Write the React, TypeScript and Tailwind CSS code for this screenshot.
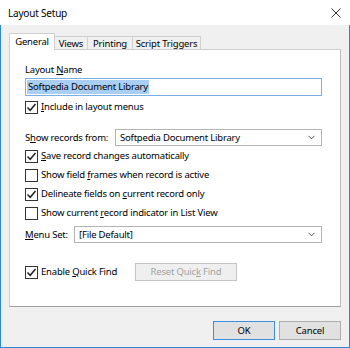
import React from 'react';

const font = { fontFamily: '"Noto Sans", "Open Sans", sans-serif' };

const Check = ({ checked }: { checked: boolean }) => (
  <span className="w-[13px] h-[13px] border border-[#333333] bg-white flex items-center justify-center shrink-0">
    {checked && (
      <svg width="11" height="11" viewBox="0 0 11 11">
        <path d="M1.5 5.5 L4.2 8.3 L9.5 2" fill="none" stroke="#222222" strokeWidth="1.5" />
      </svg>
    )}
  </span>
);

const CheckRow = ({ checked, children }: { checked: boolean; children: React.ReactNode }) => (
  <div className="flex items-center h-[14px] gap-[3px]">
    <Check checked={checked} />
    <span className="leading-[14px] whitespace-nowrap">{children}</span>
  </div>
);

const Chevron = () => (
  <svg width="7" height="5" viewBox="0 0 7 5" className="shrink-0">
    <path d="M0.5 0.8 L3.5 3.8 L6.5 0.8" fill="none" stroke="#555555" strokeWidth="1" />
  </svg>
);

// tab widths are fixed so they line up with the reference
const Tab = ({ label, width, active }: { label: string; width: string; active?: boolean }) =>
  active ? (
    <div className={`relative z-10 h-[17px] ${width} bg-white border border-b-0 border-[#d0d0d0] flex items-center justify-center leading-[14px] whitespace-nowrap`}>
      {label}
    </div>
  ) : (
    <div className={`h-[14px] ${width} bg-[#f0f0f0] border border-l-0 border-b-0 border-[#d0d0d0] flex items-center justify-center leading-[13px] whitespace-nowrap`}>
      {label}
    </div>
  );

const App: React.FC = () => {
  return (
    <div className="w-[350px] h-[348px] bg-[#f0f0f0] flex flex-col text-[9.5px] tracking-[-0.2px] text-black" style={font}>
      {/* title bar */}
      <div className="h-[25px] bg-white flex items-center justify-between pl-[8px] pr-[8px] shrink-0">
        <span className="text-[10px] leading-[14px]">Layout Setup</span>
        <svg width="10" height="10" viewBox="0 0 10 10" className="mr-[1px]">
          <path d="M0.5 0.5 L9.5 9.5 M9.5 0.5 L0.5 9.5" stroke="#333333" strokeWidth="1" />
        </svg>
      </div>

      <div className="flex-1 flex flex-col border-x border-b border-[#2f86d8] px-[8px] pt-[8px]">
        {/* tabs */}
        <div className="flex items-end h-[17px] -mb-px">
          <Tab label="General" width="w-[46px]" active />
          <Tab label="Views" width="w-[33px]" />
          <Tab label="Printing" width="w-[45px]" />
          <Tab label="Script Triggers" width="w-[68px]" />
        </div>

        {/* panel */}
        <div className="h-[258px] bg-white border border-[#cfcfcf] border-b-[#a0a0a0] border-r-[#bdbdbd] pl-[15px] pr-[18px] pt-[13px] flex flex-col">
          <div className="leading-[14px]">
            Layout <span className="underline">N</span>ame
          </div>
          <div className="mt-[1px] h-[18px] border border-[#7aaee4] flex items-center pl-[1px]">
            <span className="bg-[#a9cff3] leading-[14px] px-[1px] whitespace-nowrap">Softpedia Document Library</span>
          </div>
          <div className="mt-[4px]">
            <CheckRow checked>
              <span className="underline">I</span>nclude in layout menus
            </CheckRow>
          </div>

          <div className="mt-[15px] flex items-center h-[17px]">
            <span className="w-[90px] leading-[14px] whitespace-nowrap">
              S<span className="underline">h</span>ow records from:
            </span>
            <div className="flex-1 h-[17px] border border-[#b4b4b4] flex items-center justify-between pl-[4px] pr-[6px]">
              <span className="leading-[14px] whitespace-nowrap">Softpedia Document Library</span>
              <Chevron />
            </div>
          </div>

          <div className="mt-[3px] flex flex-col gap-[5px]">
            <CheckRow checked>
              <span className="underline">S</span>ave record changes automatically
            </CheckRow>
            <CheckRow checked={false}>
              Show field <span className="underline">f</span>rames when record is active
            </CheckRow>
            <CheckRow checked>
              Delineate fields on <span className="underline">c</span>urrent record only
            </CheckRow>
            <CheckRow checked={false}>
              Show current <span className="underline">r</span>ecord indicator in List View
            </CheckRow>
          </div>

          <div className="mt-[6px] flex items-center h-[17px]">
            <span className="w-[49px] leading-[14px] whitespace-nowrap">
              <span className="underline">M</span>enu Set:
            </span>
            <div className="flex-1 h-[17px] border border-[#b4b4b4] flex items-center justify-between pl-[4px] pr-[6px]">
              <span className="leading-[14px]">[File Default]</span>
              <Chevron />
            </div>
          </div>

          <div className="mt-[20px] flex items-center h-[18px]">
            <div className="w-[110px]">
              <CheckRow checked>
                Enable <span className="underline">Q</span>uick Find
              </CheckRow>
            </div>
            <button className="w-[102px] h-[18px] bg-[#efefef] border border-[#c6c6c6] text-[#a3a3a3] leading-[14px] flex items-center justify-center whitespace-nowrap">
              Reset Quic<span className="underline">k</span>&nbsp;Find
            </button>
          </div>
        </div>

        {/* buttons */}
        <div className="mt-[14px] flex justify-end gap-[4px]">
          <button className="w-[62px] h-[19px] bg-[#e1e1e1] border border-[#3c8fdc] leading-[14px] flex items-center justify-center">
            OK
          </button>
          <button className="w-[62px] h-[19px] bg-[#e1e1e1] border border-[#adadad] leading-[14px] flex items-center justify-center">
            Cancel
          </button>
        </div>
      </div>
    </div>
  );
};

export default App;
